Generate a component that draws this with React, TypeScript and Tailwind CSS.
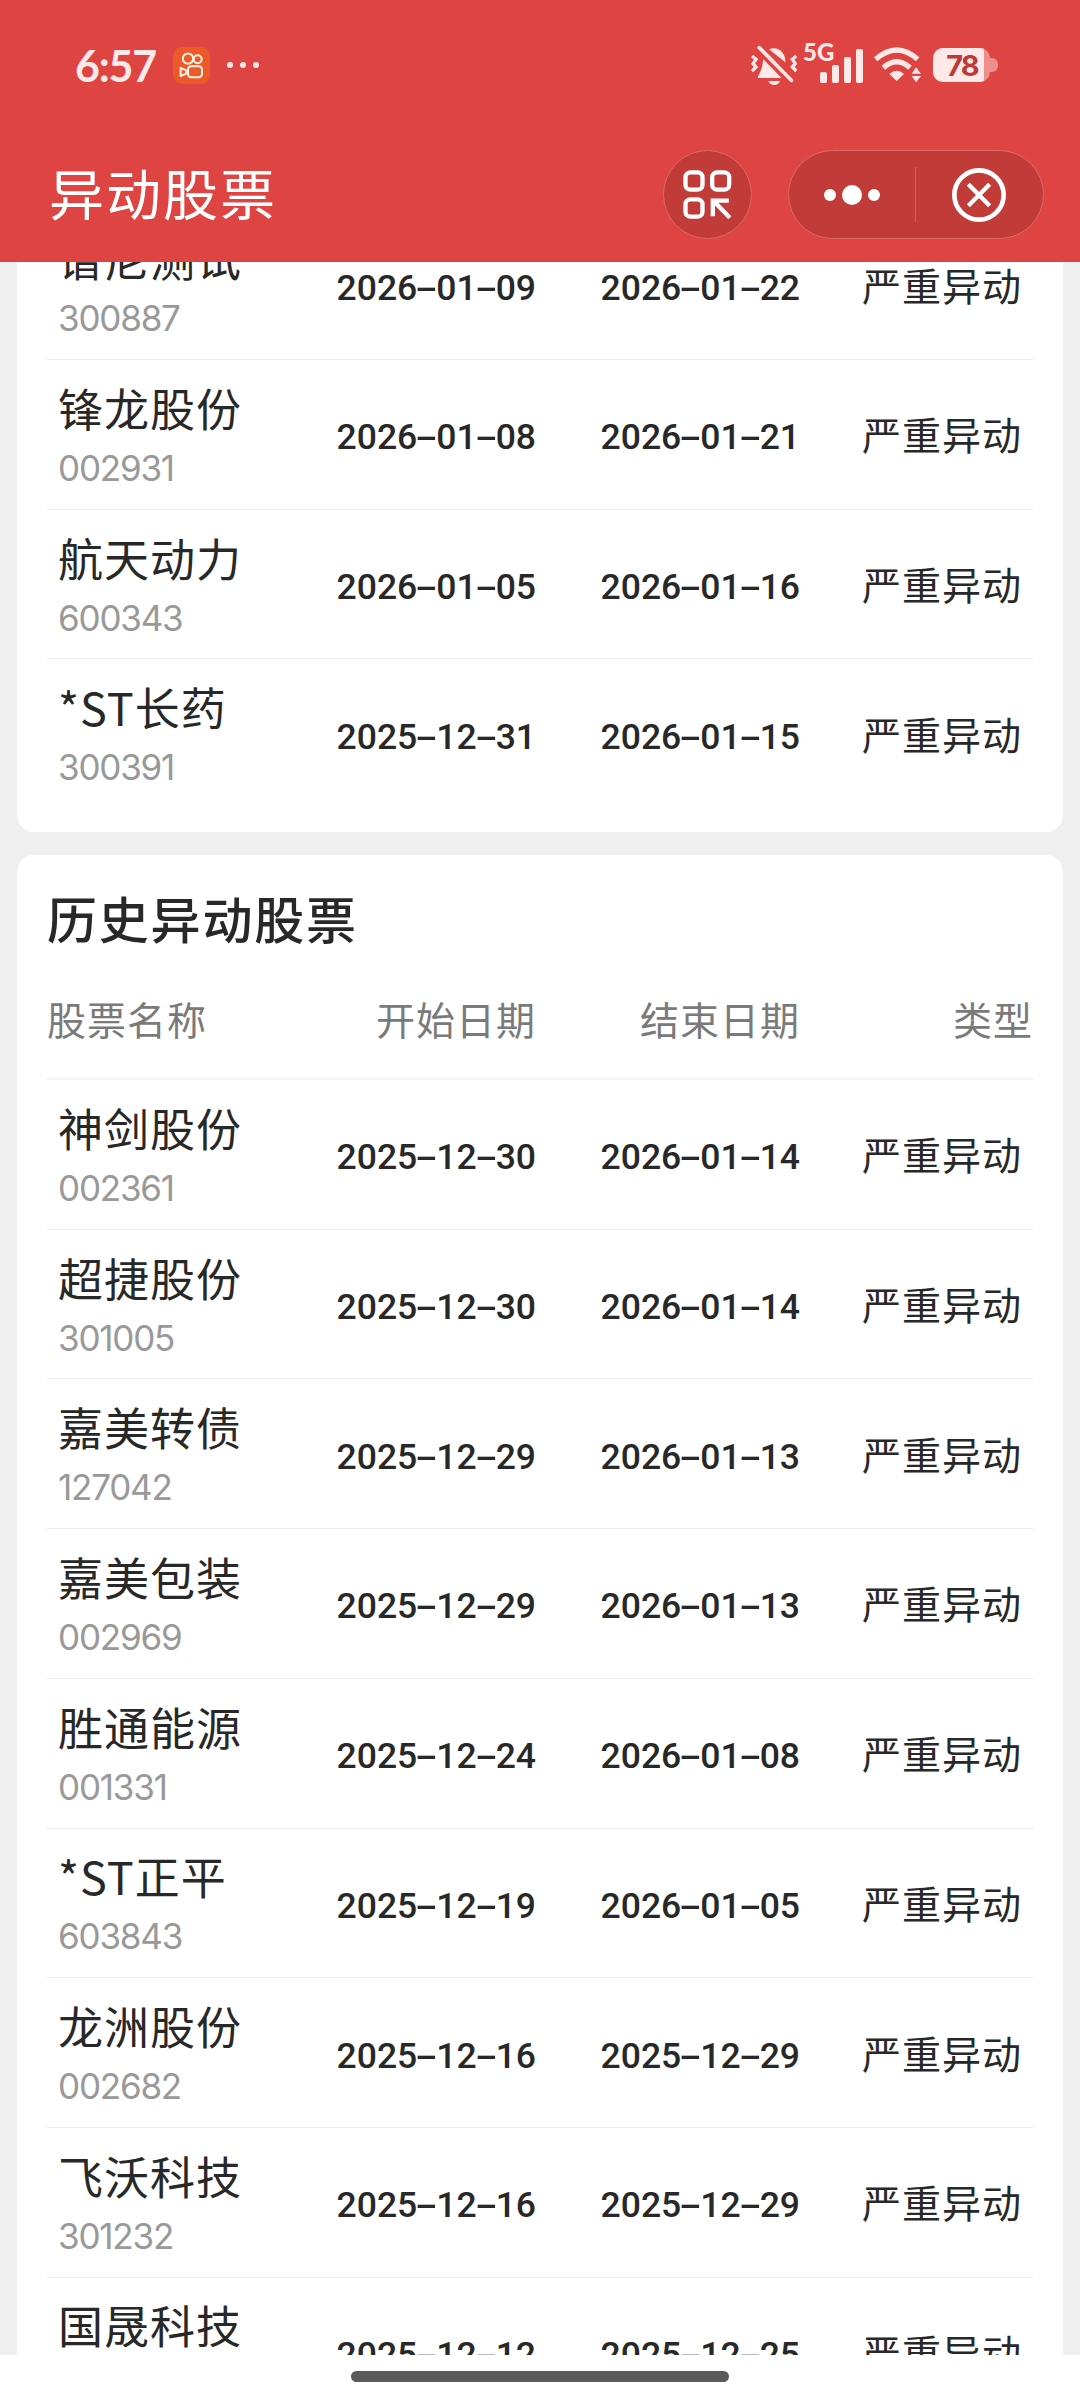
import { Fragment } from "react";

interface Stock {
  name: string;
  code: string;
  start: string;
  end: string;
}

const CURRENT: Stock[] = [
  { name: "谱尼测试", code: "300887", start: "2026-01-09", end: "2026-01-22" },
  { name: "锋龙股份", code: "002931", start: "2026-01-08", end: "2026-01-21" },
  { name: "航天动力", code: "600343", start: "2026-01-05", end: "2026-01-16" },
  { name: "*ST长药", code: "300391", start: "2025-12-31", end: "2026-01-15" },
];

const HISTORY: Stock[] = [
  { name: "神剑股份", code: "002361", start: "2025-12-30", end: "2026-01-14" },
  { name: "超捷股份", code: "301005", start: "2025-12-30", end: "2026-01-14" },
  { name: "嘉美转债", code: "127042", start: "2025-12-29", end: "2026-01-13" },
  { name: "嘉美包装", code: "002969", start: "2025-12-29", end: "2026-01-13" },
  { name: "胜通能源", code: "001331", start: "2025-12-24", end: "2026-01-08" },
  { name: "*ST正平", code: "603843", start: "2025-12-19", end: "2026-01-05" },
  { name: "龙洲股份", code: "002682", start: "2025-12-16", end: "2025-12-29" },
  { name: "飞沃科技", code: "301232", start: "2025-12-16", end: "2025-12-29" },
  { name: "国晟科技", code: "603778", start: "2025-12-12", end: "2025-12-25" },
];

/* ------------------------------------------------------------------ */
/* STATUS BAR                                                          */
/* ------------------------------------------------------------------ */

function AppBadge() {
  return (
    <svg viewBox="0 0 111 111" className="ml-[18px] h-[37px] w-[37px]" fill="none" stroke="#fff3e6" strokeWidth="6">
      <rect width="111" height="111" rx="28" fill="#ec5a2a" stroke="none" />
      <circle cx="45" cy="35" r="15.5" />
      <circle cx="74" cy="37" r="12" />
      <rect x="45" y="58" width="42" height="33" rx="10" />
      <path d="M23 63 L40 70 V80 L23 87 Z" strokeLinejoin="round" />
    </svg>
  );
}

function MutedBell() {
  return (
    <svg viewBox="64 69 138 123" className="h-[41px] w-[46px]" fill="#ffe9e8">
      <path d="M118 82 C140 71 168 86 167 121 Z" />
      <path d="M101 112 L156 168 H88 Q82 168 86 161 C95 147 98 133 101 112 Z" />
      <path d="M116 177 H151 C146 193 122 193 116 177 Z" />
      <g fill="none" stroke="#ffe9e8">
        <path d="M89 77 L185 175" strokeWidth="11" strokeLinecap="round" />
        <path d="M67 102 L79 112 L70 125 L79 135 L67 147" strokeWidth="10" />
        <path d="M200 102 L188 112 L197 125 L188 135 L200 147" strokeWidth="10" />
      </g>
    </svg>
  );
}

function Signal() {
  return (
    <div className="relative ml-[7px] h-[42px] w-[59px]">
      <span className="absolute -top-[2px] -left-px text-[24px] leading-[20px] font-black">5G</span>
      <div className="flex h-full items-end justify-end gap-[5px] pb-[3px]">
        <i className="h-[11px] w-[7px] rounded-[2px] bg-[#ffe9e8]" />
        <i className="h-[18px] w-[7px] rounded-[2px] bg-[#ffe9e8]" />
        <i className="h-[26px] w-[7px] rounded-[2px] bg-[#ffe9e8]" />
        <i className="h-[34px] w-[7px] rounded-[2px] bg-[#ffe9e8]" />
      </div>
    </div>
  );
}

function Wifi() {
  return (
    <svg viewBox="436 82 141 108" className="ml-[11px] h-[36px] w-[47px]" fill="none" stroke="#ffe9e8">
      <path d="M441 119 Q504 63 567 119" strokeWidth="16" />
      <path d="M464 144 Q504 108 544 144" strokeWidth="16" />
      <path d="M482 163 Q504 144 526 163 L504 184 Z" fill="#ffe9e8" stroke="none" />
      <path d="M549 162 L562 143 L577 162 Z M549 169 H577 L562 188 Z" fill="#ffe9e8" stroke="none" />
    </svg>
  );
}

function Battery() {
  return (
    <div className="ml-[12px] flex items-center">
      <div className="flex h-[34px] w-[57px] overflow-hidden rounded-[10px] bg-[#ed8f8c]">
        <div className="flex w-[51px] items-center justify-center bg-[#ffe9e8] pl-[7px] font-['Inter',sans-serif] text-[29px] leading-none font-bold tracking-[-2px] text-[#b93c39]">
          78
        </div>
      </div>
      <div className="h-[14px] w-[8px] rounded-r-[6px] bg-[#ed8f8c]" />
    </div>
  );
}

function StatusBar() {
  return (
    <div className="flex h-[130px] items-center justify-between pr-[82px] pl-[75px] text-[#ffe9e8]">
      <div className="flex items-center">
        <span className="w-[80px] pt-[2px] text-[43px] leading-[42px] font-bold tracking-[-1.2px]">6:57</span>
        <AppBadge />
        <div className="ml-[17px] flex gap-[7px]">
          <i className="size-[6px] rounded-full bg-[#ffe9e8]" />
          <i className="size-[6px] rounded-full bg-[#ffe9e8]" />
          <i className="size-[6px] rounded-full bg-[#ffe9e8]" />
        </div>
      </div>
      <div className="flex items-center">
        <MutedBell />
        <Signal />
        <Wifi />
        <Battery />
      </div>
    </div>
  );
}

/* ------------------------------------------------------------------ */
/* NAV BAR                                                             */
/* ------------------------------------------------------------------ */

function NavBar() {
  return (
    <div className="flex h-[132px] items-start pt-[20px] pr-[36px] pl-[49px]">
      <h1 className="flex-1 text-[55px] leading-[88px] font-normal tracking-[2px] text-white">异动股票</h1>
      <button className="flex size-[89px] items-center justify-center rounded-full border border-[#dc6a67] bg-[#c13b38]">
        <svg viewBox="130 120 146 147" className="h-[49px] w-[49px]" fill="none" stroke="#fff" strokeWidth="13">
          <rect x="137" y="127" width="51" height="52" rx="15" />
          <rect x="217" y="127" width="51" height="52" rx="15" />
          <rect x="137" y="208" width="51" height="52" rx="15" />
          <path d="M219 259 V212 H267 M222 214 L270 263" />
        </svg>
      </button>
      <div className="ml-[36px] flex h-[89px] w-[256px] items-center rounded-full border border-[#dc6a67] bg-[#c13b38]">
        <button className="flex h-full w-[126px] items-center justify-center gap-[6px] pt-px">
          <i className="size-[12px] rounded-full bg-white" />
          <i className="size-[20px] rounded-full bg-white" />
          <i className="size-[12px] rounded-full bg-white" />
        </button>
        <div className="h-[55px] w-px bg-[#d4605d]" />
        <button className="flex h-full flex-1 items-center justify-center pr-[2px]">
          <svg viewBox="0 0 162 162" className="h-[54px] w-[54px]" fill="none" stroke="#fff" strokeWidth="14">
            <circle cx="81" cy="81" r="74" />
            <path d="M49 49 L113 113 M113 49 L49 113" strokeWidth="13" />
          </svg>
        </button>
      </div>
    </div>
  );
}

/* ------------------------------------------------------------------ */
/* TABLE                                                               */
/* ------------------------------------------------------------------ */

function DateText({ value }: { value: string }) {
  return (
    <div className="pt-[6px] font-['Roboto',sans-serif] text-[35.5px] leading-[40px] font-medium">
      {value.split("-").map((part, i) => (
        <Fragment key={i}>
          {i > 0 && <span className="inline-block w-[19px] origin-center scale-x-[1.9] text-center">-</span>}
          {part}
        </Fragment>
      ))}
    </div>
  );
}

function StockRow({ stock }: { stock: Stock }) {
  return (
    <div className="flex h-[149.7px] shrink-0 items-center border-b border-[#ececec] last:border-transparent">
      <div className="w-[225px] pt-[2px] pl-[11px]">
        <div className="text-[45px] leading-[62px] tracking-[1px] whitespace-nowrap">{stock.name}</div>
        <div className="pt-[3px] font-['Inter',sans-serif] text-[35px] leading-[52px] tracking-[-1.2px] text-[#999]">
          {stock.code}
        </div>
      </div>
      <div className="w-[264px] text-right">
        <DateText value={stock.start} />
      </div>
      <div className="w-[264px] text-right">
        <DateText value={stock.end} />
      </div>
      <div className="flex-1 pr-[11px] pb-[2px] text-right text-[39px] leading-[56px] tracking-[1px]">严重异动</div>
    </div>
  );
}

export default function App() {
  return (
    <div className="flex h-[2400px] w-[1080px] flex-col overflow-hidden bg-white font-['Lato','Noto_Sans_CJK_SC',sans-serif] text-[#282828]">
      <header className="relative z-10 h-[262px] shrink-0 bg-[#de4441]">
        <StatusBar />
        <NavBar />
      </header>

      {/* Scrolled list, cut off by the header and the home bar */}
      <main className="h-[2093px] shrink-0 overflow-hidden bg-[#efefef] px-[17px] font-['Noto_Sans_CJK_SC',sans-serif]">
        <section className="-mt-[51.7px] rounded-b-[17px] bg-white px-[30px] pb-[23px]">
          {CURRENT.map((s) => (
            <StockRow key={s.code} stock={s} />
          ))}
        </section>

        <section className="mt-[23px] rounded-t-[17px] bg-white px-[30px]">
          <h2 className="flex h-[130px] items-center pb-[6px] text-[50px] leading-none font-medium tracking-[1.8px]">
            历史异动股票
          </h2>
          <div className="flex h-[95px] items-center border-b-2 border-[#f4f4f4] pb-[26px] text-[39px] leading-none tracking-[1px] text-[#7a7a7a]">
            <div className="w-[225px]">股票名称</div>
            <div className="w-[264px] text-right">开始日期</div>
            <div className="w-[264px] text-right">结束日期</div>
            <div className="flex-1 text-right">类型</div>
          </div>
          {HISTORY.map((s) => (
            <StockRow key={s.code} stock={s} />
          ))}
        </section>
      </main>

      {/* Home bar */}
      <footer className="flex h-[45px] shrink-0 justify-center bg-white pt-[16px]">
        <div className="h-[11px] w-[378px] rounded-full bg-[#5a5a5a]" />
      </footer>
    </div>
  );
}
